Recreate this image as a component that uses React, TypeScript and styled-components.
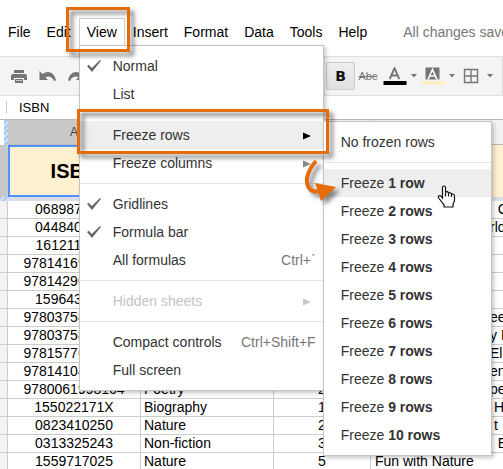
import React from 'react';
import styled, { createGlobalStyle, css } from 'styled-components';

const ORANGE = '#e46c0a';

const GlobalStyle = createGlobalStyle`
  * { box-sizing: border-box; }
  html, body { margin: 0; overflow: hidden; background: #fff; }
  body, button, input {
    font-family: "Liberation Sans", Arial, sans-serif;
    font-size: 14px;
  }
  button { margin: 0; padding: 0; border: 0; background: none; color: inherit; }
  ul { list-style: none; margin: 0; padding: 0; }
`;

const Page = styled.main`
  min-height: 100vh;
  overflow: hidden;
`;

/* ---------- Menu bar ---------- */

const MenuBar = styled.nav`
  display: flex;
  align-items: flex-start;
  height: 56px;
  padding-top: 18px;
  white-space: nowrap;
`;

const MenuSlot = styled.div`
  position: relative;
`;

const MenuButton = styled.button<{ $open?: boolean }>`
  display: block;
  height: 27px;
  padding: 0 7px;
  border: 1px solid ${(p) => (p.$open ? '#ccc' : 'transparent')};
  border-bottom: 0;
  color: #000;
`;

const SaveState = styled.span`
  margin-left: 28px;
  line-height: 28px;
  color: #777;
`;

/* ---------- Drop-down menus ---------- */

const Panel = styled.ul`
  position: absolute;
  padding: 6px 0;
  border: 1px solid #c4c4c4;
  background: #fff;
  box-shadow: 2px 2px 4px rgba(0, 0, 0, 0.22);
`;

const ViewPanel = styled(Panel)`
  top: 100%;
  left: 0;
  width: 245px;
  z-index: 2;
`;

const SubPanel = styled(Panel)`
  top: 0;
  left: 100%;
  width: 169px;
  z-index: 3;
`;

const MenuItem = styled.li`
  position: relative;
`;

const ItemButton = styled.button<{ $active?: boolean; $sub?: boolean }>`
  display: flex;
  align-items: center;
  width: 100%;
  height: 28px;
  padding: 0 7px 0 ${(p) => (p.$sub ? '17px' : '6px')};
  background: ${(p) => (p.$active ? '#eee' : 'transparent')};
  color: #333;
  text-align: left;
  white-space: pre;
  &:disabled { color: #c4c4c4; }
`;

const CheckSlot = styled.span`
  display: flex;
  width: 27px;
`;

const Shortcut = styled.span`
  margin-left: auto;
  color: #777;
`;

const ArrowSlot = styled.span<{ $color: string }>`
  display: flex;
  margin-left: auto;
  padding: 2px 5px 0 0;
  color: ${(p) => p.$color};
`;

const Separator = styled.li`
  height: 1px;
  margin: 6px 0;
  background: #e5e5e5;
`;

/* ---------- Callouts over the menus ---------- */

const Callout = styled.div`
  position: absolute;
  height: 45px;
  border: 3px solid ${ORANGE};
  filter: drop-shadow(4px 4px 2px rgba(0, 0, 0, 0.5));
  pointer-events: none;
  z-index: 5;
`;

const TabCallout = styled(Callout)`
  top: -11px;
  left: -13px;
  width: 64px;
`;

const ItemCallout = styled(Callout)`
  top: -12px;
  left: -3px;
  width: 252px;
`;

const CurvedArrow = styled.svg`
  position: absolute;
  top: 34px;
  left: 220px;
  filter: drop-shadow(4px 4px 2px rgba(0, 0, 0, 0.45));
  pointer-events: none;
  z-index: 6;
`;

const HandCursor = styled.svg`
  position: absolute;
  top: 16px;
  left: 113px;
  pointer-events: none;
  z-index: 6;
`;

/* ---------- Toolbar ---------- */

const Toolbar = styled.div`
  display: flex;
  align-items: center;
  height: 40px;
  border: 1px solid #e0e0e0;
  border-width: 1px 0;
  background: #f4f4f4;
  color: #757575;
`;

const History = styled.div`
  display: flex;
  align-items: center;
  flex: 0 0 326px;
  gap: 12px;
  padding-left: 11px;
`;

const HistoryButton = styled.button`
  display: flex;
`;

const ToolGroup = styled.div`
  display: flex;
  flex: none;
  align-items: center;
  height: 100%;
  padding-right: 7px;
  border-right: 1px solid #ddd;
`;

const ToolButton = styled.button<{ $pressed?: boolean; $width: number }>`
  display: flex;
  align-items: center;
  justify-content: center;
  width: ${(p) => p.$width}px;
  height: 28px;
  ${(p) =>
    p.$pressed &&
    css`
      border: 1px solid #ccc;
      border-radius: 2px;
      background: linear-gradient(#eee, #e0e0e0);
    `}
`;

const BoldLabel = styled.span`
  font: bold 14px "DejaVu Sans", sans-serif;
  color: #111;
`;

const StrikeLabel = styled.span`
  font-size: 11px;
  text-decoration: line-through;
  color: #777;
`;

/* ---------- Formula bar ---------- */

const FormulaBar = styled.label`
  display: flex;
  align-items: center;
  height: 24px;
  border-bottom: 1px solid #bbb;
`;

const FormulaMark = styled.span`
  width: 1px;
  height: 13px;
  margin: 0 12px 0 6px;
  background: #ccc;
`;

const FormulaInput = styled.input`
  flex: 1;
  min-width: 0;
  height: 20px;
  padding: 0;
  border: 0;
  outline: 0;
  font-size: 13px;
  color: #000;
`;

/* ---------- Sheet ---------- */

const Sheet = styled.table`
  width: 100%;
  table-layout: fixed;
  border-collapse: separate;
  border-spacing: 0;
  line-height: 17px;
  color: #000;
`;

const Column = styled.col<{ $width?: number }>`
  width: ${(p) => (p.$width ? `${p.$width}px` : 'auto')};
`;

const ColumnHead = styled.th<{ $selected?: boolean }>`
  height: 25px;
  padding: 0;
  border-right: 1px solid #ccc;
  border-bottom: 1px solid #bbb;
  background: ${(p) => (p.$selected ? '#c8c8c8' : '#f3f3f3')};
  font-size: 12px;
  font-weight: normal;
  color: #444;
  &:last-child { border-right: 0; }
`;

const stripes = css`
  background: repeating-linear-gradient(135deg, #a9c6f5 0 2px, #d3e2fa 2px 4px);
`;

const Corner = styled.td`
  padding: 0 0 0 4px;
  ${stripes}
  background-clip: content-box;
`;

const RowHead = styled.th<{ $selected?: boolean }>`
  padding: 0;
  border-right: 1px solid #ccc;
  border-bottom: 1px solid #ccc;
  background: ${(p) => (p.$selected ? '#c8c8c8' : '#f3f3f3')};
`;

const TitleCell = styled.td<{ $selected?: boolean }>`
  height: 52px;
  padding: 0;
  border: 2px solid ${(p) => (p.$selected ? '#4d90fe' : '#fff0cf')};
  background: #fff0cf;
  font-size: 20px;
  font-weight: bold;
  text-align: center;
`;

const FreezeHandle = styled.td`
  height: 4px;
  padding: 0;
  ${stripes}
`;

const FreezeBar = styled.td`
  height: 4px;
  padding: 0;
  background: #d9dee8;
`;

const Cell = styled.td<{ $center?: boolean }>`
  height: 18px;
  padding: 0 3px;
  border-right: 1px solid #ccc;
  border-bottom: 1px solid #ccc;
  overflow: hidden;
  white-space: pre;
  text-align: ${(p) => (p.$center ? 'center' : 'left')};
  &:last-child { border-right: 0; }
`;

const BookCell = styled(Cell)<{ $tail?: boolean }>`
  padding: 0 0 0 ${(p) => (p.$tail ? '119px' : '4px')};
`;

/* ---------- Icons ---------- */

const Check = () => (
  <svg width="16" height="14" viewBox="0 0 16 14">
    <path d="M1 7 L2.800 5.800 L5.800 9 L14 1 L15 1.800 L6 13Z" fill="#666" />
  </svg>
);

const Triangle = () => (
  <svg width="8" height="8" viewBox="0 0 8 8">
    <path d="M0 0.5 L8 4 L0 7.5Z" fill="currentColor" />
  </svg>
);

const Caret = () => (
  <svg width="6" height="4" viewBox="0 0 6 4">
    <path d="M0 0 H6 L3 3.500Z" fill="#777" />
  </svg>
);

const Printer = () => (
  <svg width="16" height="15" viewBox="0 0 16 15">
    <path d="M3 1h10v3H3z M2 5h12a2 2 0 0 1 2 2v4h-3V9H3v2H0V7a2 2 0 0 1 2-2z M4 10h8v4H4z" fill="#757575" />
    <path d="M5 11.500h6" stroke="#ccc" />
  </svg>
);

const Undo = () => (
  <svg width="17" height="12" viewBox="0 0 17 12">
    <path d="M0.500 1 V10 H9 L6.500 7.200 C10 5.500 13.500 7 15 11 L17 10.300 C15.500 2.500 9 -0.500 3.500 4Z" fill="#757575" />
  </svg>
);

const Redo = () => (
  <svg width="17" height="12" viewBox="0 0 17 12">
    <path d="M16.500 1 V10 H8 L10.500 7.200 C7 5.500 3.500 7 2 11 L0 10.300 C1.500 2.500 8 -0.500 13.500 4Z" fill="#757575" />
  </svg>
);

const TextColor = () => (
  <svg width="24" height="18" viewBox="0 0 24 18">
    <path d="M6.700 12 L11.500 1.200 L16.300 12 M8.500 8.500 H14.500" fill="none" stroke="#757575" strokeWidth="1.900" />
    <path d="M0.500 14h23v4h-23z" fill="#000" />
  </svg>
);

const FillColor = () => (
  <svg width="24" height="18" viewBox="0 0 24 18">
    <path d="M4.500 0.500h14v12h-14z" fill="#757575" />
    <path d="M7 12.500 L11.500 2.500 L16 12.500 M8.500 9 H14.500" fill="none" stroke="#fff" strokeWidth="1.700" />
    <path d="M0.500 14h23v4h-23z" fill="#ffefc8" />
  </svg>
);

const Borders = () => (
  <svg width="16" height="16" viewBox="0 0 16 16">
    <path d="M1.500 1.500h13v13h-13z M8 1.500v13 M1.500 8h13" fill="none" stroke="#757575" strokeWidth="1.400" />
  </svg>
);

/* ---------- Data ---------- */

type Book = { isbn: string; genre?: string; level?: string; title?: string; tail?: string };

const books: Book[] = [
  { isbn: '0689876491', tail: '  C' },
  { isbn: '0448405202', tail: 'rld' },
  { isbn: '1612113400' },
  { isbn: '9781416914638' },
  { isbn: '9781429612340' },
  { isbn: '1596431520' },
  { isbn: '9780375832291', tail: 'ee' },
  { isbn: '9780375866746', tail: 'y F' },
  { isbn: '9781577657910', tail: 'Ell' },
  { isbn: '9781410420213', tail: 'en' },
  { isbn: '9780061998164', genre: 'Poetry', level: '2', tail: 'pe' },
  { isbn: '155022171X', genre: 'Biography', level: '1', tail: ' H' },
  { isbn: '0823410250', genre: 'Nature', level: '2', tail: ' t' },
  { isbn: '0313325243', genre: 'Non-fiction', level: '3', tail: '  E' },
  { isbn: '1559717025', genre: 'Nature', level: '5', title: 'Fun with Nature' },
];

type ItemProps = {
  label: string;
  checked?: boolean;
  shortcut?: string;
  arrow?: string;
  active?: boolean;
  disabled?: boolean;
  children?: React.ReactNode;
};

const Item = ({ label, checked, shortcut, arrow, active, disabled, children }: ItemProps) => (
  <MenuItem>
    <ItemButton $active={active} disabled={disabled}>
      <CheckSlot>{checked && <Check />}</CheckSlot>
      {label}
      {shortcut && <Shortcut>{shortcut}</Shortcut>}
      {arrow && (
        <ArrowSlot $color={arrow}>
          <Triangle />
        </ArrowSlot>
      )}
    </ItemButton>
    {children}
  </MenuItem>
);

const FreezeRowsMenu = () => (
  <SubPanel>
    <MenuItem>
      <ItemButton $sub>No frozen rows</ItemButton>
    </MenuItem>
    <Separator />
    {Array.from({ length: 10 }, (_, i) => i + 1).map((n) => (
      <MenuItem key={n}>
        <ItemButton $sub $active={n === 1}>
          Freeze <b>{n === 1 ? '1 row' : `${n} rows`}</b>
        </ItemButton>
        {n === 1 && (
          <HandCursor width="19" height="24" viewBox="0 0 19 24">
            <path
              d="M5.500 13 V2.500 Q5.500 1 7 1 Q8.500 1 8.500 2.500 V7.500 Q9 6.500 10.200 6.700 Q11.500 7 11.500 8.500 Q12 7.500 13.200 7.800 Q14.500 8 14.500 9.500 Q15 8.800 16 9 Q17.500 9.500 17.500 11 V15 Q17.500 17 16 19 V22 H7 V20 L2 13.500 Q0.800 11.800 1.800 11 Q3 10 4.200 11.300Z"
              fill="#fff"
              stroke="#111"
              strokeWidth="1.200"
            />
            <path d="M8.500 7.500 V11.500 M11.500 8.500 V11.500 M14.500 9.500 V12" stroke="#111" strokeWidth="1.200" />
          </HandCursor>
        )}
      </MenuItem>
    ))}
  </SubPanel>
);

const ViewMenu = () => (
  <ViewPanel>
    <Item label="Normal" checked />
    <Item label="List" />
    <Separator />
    <Item label="Freeze rows" arrow="#000" active>
      <FreezeRowsMenu />
      <ItemCallout />
      <CurvedArrow width="42" height="52" viewBox="0 0 42 52">
        <path d="M16 6 C8 15 5 25 8 31 C10 36 15 38 21 35" fill="none" stroke={ORANGE} strokeWidth="4" />
        <path d="M15 28 L36 32 L21 46Z" fill={ORANGE} />
      </CurvedArrow>
    </Item>
    <Item label="Freeze columns" arrow="#888" />
    <Separator />
    <Item label="Gridlines" checked />
    <Item label="Formula bar" checked />
    <Item label="All formulas" shortcut="Ctrl+`" />
    <Separator />
    <Item label="Hidden sheets" arrow="#c8c8c8" disabled />
    <Separator />
    <Item label="Compact controls" shortcut="Ctrl+Shift+F" />
    <Item label="Full screen" />
  </ViewPanel>
);

export default function App() {
  return (
    <Page>
      <GlobalStyle />
      <MenuBar>
        {['File', 'Edit', 'View', 'Insert', 'Format', 'Data', 'Tools', 'Help'].map((name) => (
          <MenuSlot key={name}>
            <MenuButton $open={name === 'View'}>{name}</MenuButton>
            {name === 'View' && (
              <>
                <ViewMenu />
                <TabCallout />
              </>
            )}
          </MenuSlot>
        ))}
        <SaveState>All changes saved in Drive</SaveState>
      </MenuBar>

      <Toolbar>
        <History>
          <HistoryButton aria-label="Print"><Printer /></HistoryButton>
          <HistoryButton aria-label="Undo"><Undo /></HistoryButton>
          <HistoryButton aria-label="Redo"><Redo /></HistoryButton>
        </History>
        <ToolGroup>
          <ToolButton $width={29} $pressed aria-label="Bold"><BoldLabel>B</BoldLabel></ToolButton>
          <ToolButton $width={26} aria-label="Strikethrough"><StrikeLabel>Abc</StrikeLabel></ToolButton>
          <ToolButton $width={28} aria-label="Text color"><TextColor /></ToolButton>
          <ToolButton $width={10} aria-label="Text color options"><Caret /></ToolButton>
          <ToolButton $width={28} aria-label="Fill color"><FillColor /></ToolButton>
          <ToolButton $width={10} aria-label="Fill color options"><Caret /></ToolButton>
          <ToolButton $width={28} aria-label="Borders"><Borders /></ToolButton>
          <ToolButton $width={10} aria-label="Border options"><Caret /></ToolButton>
        </ToolGroup>
      </Toolbar>

      <FormulaBar>
        <FormulaMark />
        <FormulaInput aria-label="Formula" defaultValue="ISBN" />
      </FormulaBar>

      <Sheet>
        <colgroup>
          <Column $width={8} />
          <Column $width={133} />
          <Column $width={133} />
          <Column $width={97} />
          <Column />
        </colgroup>
        <thead>
          <tr>
            <Corner />
            <ColumnHead $selected>A</ColumnHead>
            <ColumnHead />
            <ColumnHead />
            <ColumnHead />
          </tr>
        </thead>
        <tbody>
          <tr>
            <RowHead $selected />
            <TitleCell $selected>ISBN</TitleCell>
            <TitleCell />
            <TitleCell />
            <TitleCell />
          </tr>
          <tr>
            <FreezeHandle />
            <FreezeBar colSpan={4} />
          </tr>
          {books.map((book) => (
            <tr key={book.isbn}>
              <RowHead />
              <Cell $center>{book.isbn}</Cell>
              <Cell>{book.genre}</Cell>
              <Cell $center>{book.level}</Cell>
              <BookCell $tail={!!book.tail}>{book.title ?? book.tail}</BookCell>
            </tr>
          ))}
        </tbody>
      </Sheet>
    </Page>
  );
}
